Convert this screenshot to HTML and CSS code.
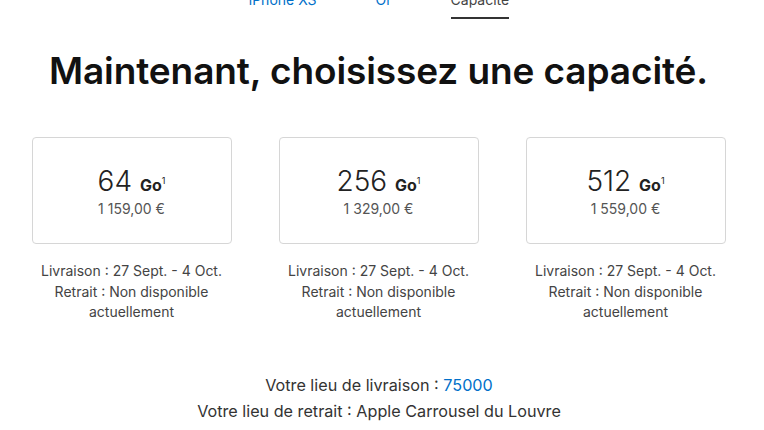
FILE: index.html
```html
<!DOCTYPE html>
<html lang="fr">
<head>
    <meta charset="UTF-8">
    <meta name="viewport" content="width=device-width, initial-scale=1.0">
    <title>Acheter iPhone XS</title>
    <link rel="stylesheet" href="styles.css">
</head>
<body>
    <nav class="steps">
        <a href="#" class="step">iPhone XS</a>
        <a href="#" class="step">Or</a>
        <span class="step current">Capacité</span>
    </nav>

    <h1>Maintenant, choisissez une capacité.</h1>

    <div class="options">
        <div class="option">
            <div class="tile">
                <p class="size">64 <span class="unit">Go<sup>1</sup></span></p>
                <p class="price">1 159,00 €</p>
            </div>
            <p class="info">Livraison : 27 Sept. - 4 Oct.<br>Retrait : Non disponible actuellement</p>
        </div>
        <div class="option">
            <div class="tile">
                <p class="size">256 <span class="unit">Go<sup>1</sup></span></p>
                <p class="price">1 329,00 €</p>
            </div>
            <p class="info">Livraison : 27 Sept. - 4 Oct.<br>Retrait : Non disponible actuellement</p>
        </div>
        <div class="option">
            <div class="tile">
                <p class="size">512 <span class="unit">Go<sup>1</sup></span></p>
                <p class="price">1 559,00 €</p>
            </div>
            <p class="info">Livraison : 27 Sept. - 4 Oct.<br>Retrait : Non disponible actuellement</p>
        </div>
    </div>

    <div class="location">
        <p>Votre lieu de livraison : <a href="#">75000</a></p>
        <p>Votre lieu de retrait : Apple Carrousel du Louvre</p>
    </div>
</body>
</html>
```

FILE: styles.css
```css
* {
    margin: 0;
    padding: 0;
    box-sizing: border-box;
}

body {
    background-color: #fff;
    color: #333;
    font-family: 'Inter', 'Liberation Sans', sans-serif;
    width: 764px;
    overflow: hidden;
}

a {
    color: #0070c9;
    text-decoration: none;
}

.steps {
    display: flex;
    justify-content: center;
    gap: 59px;
    margin-top: -10px;
    padding-right: 6px;
    font-size: 14px;
    line-height: 20px;
}

.step {
    padding-bottom: 7px;
    border-bottom: 2px solid transparent;
}

.step.current {
    color: #444;
    border-bottom-color: #333;
}

h1 {
    margin-top: 30px;
    font-size: 37px;
    font-weight: 600;
    color: #111;
    text-align: center;
    letter-spacing: -0.1px;
    padding-right: 7px;
    line-height: 44px;
}

.options {
    display: flex;
    justify-content: center;
    gap: 47px;
    margin-top: 44px;
    padding-right: 7px;
}

.option {
    width: 200px;
    text-align: center;
}

.tile {
    height: 107px;
    border: 1px solid #d6d6d6;
    border-radius: 4px;
    padding-top: 28px;
}

.size {
    font-size: 28px;
    font-weight: 300;
    line-height: 29px;
    color: #222;
}

.unit {
    font-size: 16px;
    font-weight: 700;
}

.unit sup {
    font-size: 9px;
    font-weight: 400;
    vertical-align: 7px;
}

.price {
    font-size: 14px;
    color: #555;
    line-height: 18px;
}

.info {
    margin-top: 17px;
    font-size: 14px;
    line-height: 20.5px;
    color: #444;
}

.location {
    margin-top: 49px;
    text-align: center;
    font-size: 16.2px;
    line-height: 26px;
    color: #333;
    padding-right: 6px;
}
```
